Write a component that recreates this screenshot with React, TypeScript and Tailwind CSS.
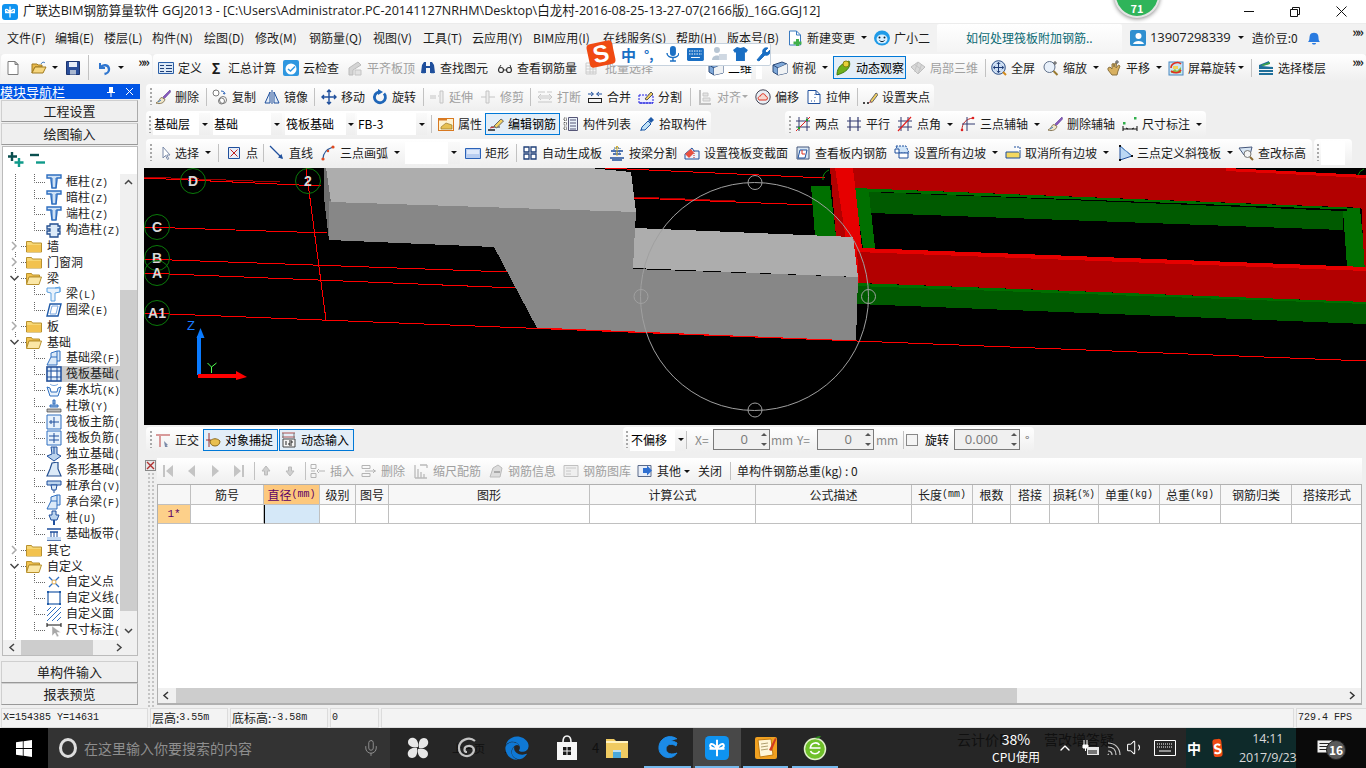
import type { ReactNode } from "react"
import { ChevronUp, Mic, Volume1 } from "lucide-react"
import { FaEdge } from "react-icons/fa"

const S = ({ children }: { children: ReactNode }) => (
  <svg width="16" height="16" viewBox="0 0 16 16" className="shrink-0 block">{children}</svg>
)

const blue = "#2a62b8"
const dk = "#1f4f9c"

const I = {
  newDoc: <S><path d="M3 1.500h7l3 3v10H3z" fill="#fff" stroke="#7c7c7c" /><path d="M10 1.500v3h3z" fill="#ddd" stroke="#7c7c7c" /></S>,
  open: <S><path d="M1 4h5l1 1h4v2H4l-3 6z" fill="#e8b84a" stroke="#a07a20" /><path d="M4 7h11l-3 6H1z" fill="#f6d67e" stroke="#a07a20" /><path d="M10 4c1-2 3-2.500 4-1" fill="none" stroke="#4a7fc0" /></S>,
  save: <S><path d="M1.500 1.500h13v13h-13z" fill="#2b4f9a" stroke="#1c3570" /><path d="M4 2h8v5H4z" fill="#e8eef8" /><path d="M5 10h6v4.500H5z" fill="#aab8d0" /></S>,
  undo: <S><path d="M4 3v5h5" fill="none" stroke="#2f76cf" strokeWidth="2" /><path d="M4.500 7.500C7 4 12.500 4.500 13 9c.3 2.500-2 4.500-4.500 5" fill="none" stroke="#2f76cf" strokeWidth="2.400" /></S>,
  define: <S><path d="M.5 2.500h15v11H.5z" fill="#dbe8f6" stroke="#2a5fa8" /><path d="M2 5h4v1H2zM2 8h4v1H2zM2 11h4v1H2zM8 5h6v1H8zM8 8h6v1H8zM8 11h6v1H8z" fill="#1f3f78" /></S>,
  cloud: <S><rect y="0" width="16" height="16" rx="2" fill="#2f97e0" /><circle cx="8" cy="9" r="5.500" fill="#fff" /><path d="M5 9l2.500 2L12 6.500" fill="none" stroke="#2f97e0" strokeWidth="1.500" /></S>,
  flush: <S><path d="M2 8l9-6 3 3-8 5v5H2z" fill="#d4d4d4" stroke="#bbb" /><path d="M8 10h6v5H8z" fill="#e2e2e2" stroke="#c4c4c4" /></S>,
  binoc: <S><path d="M2 5l2-3h2v4h4V2h2l2 3 1 8h-5V8H6v5H1z" fill={dk} /><path d="M2 13h3v1H2zM11 13h3v1h-3z" fill="#bcd" /></S>,
  glasses: <S><circle cx="4" cy="10" r="2.500" fill="none" stroke="#333" strokeWidth="1.200" /><circle cx="12" cy="10" r="2.500" fill="none" stroke="#333" strokeWidth="1.200" /><path d="M6.500 10h3M2 8l2-3M14 8l-1-3" stroke="#333" /></S>,
  batch: <S><path d="M1 3h10v11H1z" fill="none" stroke="#ccc" /><path d="M1 6h10M1 9h10M1 12h10M5 3v11M8 3v11" stroke="#ccc" /></S>,
  cube: <S><path d="M1 5l9-3 5 2v9l-9 2-5-3z" fill="#7fa8d8" stroke="#2c4a78" /><path d="M1 5l5 3v7M6 8l9-4" fill="none" stroke="#2c4a78" /><path d="M6 8l9-4v9l-9 2z" fill="#f0f2f4" /></S>,
  orbit: <S><path d="M1 15c0-5 2-9 6-11l6-3c1 2 1 4 0 6-2 4-6 6-12 8z" fill="#6fb01c" stroke="#3f7a10" /><circle cx="10" cy="4" r="3" fill="#e6d23a" stroke="#8a8010" /></S>,
  cubeGray: <S><path d="M1 7l7-5 7 5-7 7z" fill="#d8d8d8" stroke="#bdbdbd" /><path d="M4.500 4.500l7 5M8 2l-3.500 9.500M11.500 4.500L8 14" stroke="#c4c4c4" /></S>,
  full: <S><circle cx="7.500" cy="7.500" r="6.800" fill="#cfe0f4" stroke="#2c4f86" /><path d="M7.500 2.500v10M2.500 7.500h10M5.800 4l1.700-1.700L9.200 4M5.800 11l1.700 1.700 1.700-1.700M4 5.800L2.300 7.500 4 9.200M11 5.800l1.700 1.700L11 9.200" fill="none" stroke="#1d3a74" /><path d="M12 12l3 3" stroke="#d28a1a" strokeWidth="2" /></S>,
  zoomI: <S><circle cx="6.500" cy="7" r="5.500" fill="#e8f0fa" stroke="#60708a" /><path d="M10.500 11l4 4" stroke="#9a7a30" strokeWidth="2" /><path d="M12 1v4M10 3h4" stroke="#555" /></S>,
  hand: <S><path d="M2 8l2-1 2 2V4l1.500-.5L8 7l1-4 1.500.5L10 8l2.500-3 1.500 1-2 5-1 4H6L2 10z" fill="#d8b060" stroke="#8a7240" /><path d="M11 0v4M9 2h4" stroke="#555" /></S>,
  screenRot: <S><rect x="1" y="2" width="14" height="13" fill="#c8e4f4" stroke="#4a88c0" /><path d="M3 12l4-3 2 2 4-4v6H3z" fill="#8cc04a" /><path d="M3 8C3 3 10 1 13 4" fill="none" stroke="#e03020" strokeWidth="1.600" /><path d="M3 11c4 3 8 2 10-1" fill="none" stroke="#e03020" strokeWidth="1.600" /><path d="M5 6h5v3H5z" fill="#f2d45a" /></S>,
  floors: <S><path d="M1 5l10-4v3L4 6l11 1v2H1zM1 10h14v2H1zM1 13h14v2H1z" fill="#1f6f9a" /><path d="M3 5l9-3v2L5 6z" fill="#3aa04a" /></S>,
  brush: <S><path d="M15 1L8 8l1.500 1.500L15.500 3z" fill="#8a5ac0" stroke="#5a3a90" strokeWidth=".6" /><path d="M7 8.500C4 9 5 12 1 14c4 1.500 8 0 9-3.500z" fill="#efe6c8" stroke="#8a7a58" /><path d="M3 13l3-2" stroke="#3a7ac0" /></S>,
  copy: <S><circle cx="4" cy="4" r="3" fill="#fff" stroke="#7a7a7a" /><circle cx="11" cy="11" r="3.500" fill="#fff" stroke="#7a7a7a" /><circle cx="9.500" cy="12" r="3" fill="none" stroke="#7a7a7a" /><path d="M9 2c3 0 4 2 4 3M13 5l-2-.5" fill="none" stroke={blue} /></S>,
  mirror: <S><path d="M1 14L6 3v11zM10 3l5 11h-5z" fill="#e4eef8" stroke={dk} /><path d="M8 1v14" stroke={dk} /></S>,
  move: <S><path d="M8 1v14M1 8h14M6 3l2-2 2 2M6 13l2 2 2-2M3 6L1 8l2 2M13 6l2 2-2 2" fill="none" stroke={dk} strokeWidth="1.400" /></S>,
  rot: <S><path d="M12 4.500A5.500 5.500 0 1 1 7 2.800" fill="none" stroke="#1f66b8" strokeWidth="2.800" /><path d="M6 0l5 3-5 3z" fill="#1f66b8" /></S>,
  extend: <S><path d="M1 7h6M1 9h6M9 7h1" stroke="#c4c4c4" /><path d="M11 2h3v12h-3z" fill="#eee" stroke="#c4c4c4" /></S>,
  trim: <S><path d="M1 8h14" stroke="#c4c4c4" /><path d="M6 2h3v12H6z" fill="#eee" stroke="#c4c4c4" /></S>,
  cut: <S><path d="M1 3h7M10 3h5M1 13h14M2 7h12M2 9h12" stroke="#c8c8c8" /><path d="M4 5L1 8l3 3M12 5l3 3-3 3" fill="none" stroke="#c8c8c8" /></S>,
  merge: <S><path d="M1 5h5M10 5h5M4 3L6.500 5 4 7M12 3L9.500 5 12 7" fill="none" stroke={dk} /><path d="M1 9h14v1H1zM1 13h14v1H1zM1 9h1v5H1zM14 9h1v5h-1z" fill="#222" /></S>,
  split: <S><path d="M1 6h14v8H1z" fill="#eef" stroke="#2020e0" strokeDasharray="2 1" /><path d="M7 10l6-7 2 2-6 6z" fill="#f2d060" stroke="#555" /><path d="M1 14h14" stroke="#2020e0" /></S>,
  align: <S><path d="M3 1v14h11" fill="none" stroke="#c0c0c0" strokeWidth="2" /><path d="M6 4h5v3H6zM6 9h7v3H6z" fill="#e4e4e4" stroke="#c8c8c8" /></S>,
  offset: <S><circle cx="8" cy="8" r="7.200" fill="#e8eef4" stroke="#445" /><path d="M4 11c-2-2 0-4 1.500-4C6 4 10 4 10.500 7c2 0 2.500 3 1 4z" fill="#f6d8d0" stroke="#e03020" /></S>,
  stretch: <S><path d="M2 1.500h8l4 4v9H2z" fill="#fff" stroke={dk} /><path d="M10 1.500v4h4M5 12h1M8 12h1M9 8v1M9 5v1" fill="none" stroke={dk} /></S>,
  grip: <S><path d="M1 14h2M5 14h2" stroke="#111" strokeWidth="1.400" /><path d="M8 12l6-8 2 1.500-6 8z" fill="#f2d060" stroke="#666" /><path d="M8 12l-1 2 2-.500" fill="#c33" /></S>,
  attr: <S><rect x=".5" y="2.500" width="15" height="12" fill="#fdf2d0" stroke="#d87820" /><path d="M1 2.500h8v2H1z" fill="#d87820" /><path d="M3 11l5-4 6 2v4H3z" fill="#e6c050" stroke="#8a6a20" strokeWidth=".6" /></S>,
  editBar: <S><path d="M0 14h7" stroke="#111" strokeWidth="1.400" /><path d="M3 11h9" stroke="#333" /><path d="M6 10l7-7 2.500 2-7 7z" fill="#f2d060" stroke="#666" /><path d="M2 12l4-1" stroke="#c33" /></S>,
  list: <S><path d="M5.500 1.500h9v13h-9z" fill="#eaf2fa" stroke="#557" /><path d="M7 4h6M7 7h6M7 10h6M7 13h6" stroke="#557" /><path d="M1 2h2.500v2.500H1zM1 6.500h2.500V9H1zM1 11h2.500v2.500H1z" fill="#fff" stroke="#333" strokeDasharray="1 .6" strokeWidth=".8" /></S>,
  picker: <S><path d="M2 14l1-3 6-6 3 3-6 6z" fill="#bfe0f6" stroke="#1f5aa8" /><path d="M9 4l3-3 3 3-3 3z" fill="#1f5aa8" /><path d="M1.500 15l1.500-2" stroke="#1f5aa8" /></S>,
  twoPt: <S><path d="M4 1v14M12 1v14M1 5h14M1 11h14" stroke="#333a70" /><path d="M1 15L15 1" stroke="#e02020" /><circle cx="4" cy="12" r="1.200" fill="#20a020" /><circle cx="12" cy="4" r="1.200" fill="#20a020" /></S>,
  parallel: <S><path d="M4 1v14M12 1v14M1 5h14M1 11h14" stroke="#333a70" strokeWidth="1.200" /></S>,
  angle: <S><path d="M4 1v14M11 1v14M1 5h14M1 11h14" stroke="#333a70" /><path d="M1 15L14 1" stroke="#e02020" strokeWidth="1.200" /></S>,
  arc3: <S><path d="M2 14C2 7 6 3 13 2" fill="none" stroke="#c02020" /><path d="M7 1v14M2 8h13" stroke="#333a70" /><circle cx="2" cy="14" r="1.300" fill="#e02020" /><circle cx="13" cy="2" r="1.300" fill="#e02020" /></S>,
  dim: <S><path d="M1 10v5M15 10v5M1 13h14M6 13l-2-1M10 13l2-1" fill="none" stroke="#111" /><rect x="1" y="6" width="2.500" height="2.500" fill="#2fb04a" /><rect x="12" y="1" width="2.500" height="2.500" fill="#2fb04a" /></S>,
  arrow: <S><path d="M8 2v11l2.500-2.500 2 4 1.300-.7-2-3.800h3.200z" fill="#fff" stroke="#7a8aa8" /></S>,
  point: <S><path d="M2.500 2.500h11v11h-11z" fill="#e8eef8" stroke={dk} /><path d="M4.500 4.500l7 7M11.500 4.500l-7 7" stroke="#c02020" /></S>,
  line: <S><path d="M1 1l12 12" stroke={dk} strokeWidth="1.300" /><path d="M14 14l-5-1.500 3.500-3.500z" fill={dk} /></S>,
  arc: <S><path d="M3 14C3 8 7 4 13 2" fill="none" stroke="#2a5a9a" strokeWidth="1.200" /><circle cx="3" cy="14" r="1.600" fill="#e04a20" /><circle cx="8" cy="6" r="1.200" fill="#e04a20" /><circle cx="13" cy="2" r="1.600" fill="#e04a20" /></S>,
  rect: <S><path d="M.5 3.500h15v10H.5z" fill="#b8cdf0" stroke={blue} /><path d="M2 5h12v4H2z" fill="#dfe9fa" /></S>,
  auto: <S><path d="M2 2h5v5H2zM9 2h5v5H9zM2 9h5v5H2zM9 9h5v5H9z" fill="#fff" stroke="#1f3f78" strokeWidth="1.300" /></S>,
  beam: <S><path d="M2 6h12M4 9h8M1 13h14M3 15h10" stroke={dk} strokeWidth="1.500" /><path d="M8 1v10M6 4l2-3 2 3" fill="none" stroke="#d8b020" /><rect x="5" y="3" width="6" height="4" fill="none" stroke={blue} strokeDasharray="1 1" /></S>,
  sect: <S><path d="M1 9l7-6 2 3H15v8H1z" fill="#eef3fa" stroke={dk} /><path d="M1 9l6-5 3 4-5 5z" fill="#e85040" /><path d="M10 6v8" stroke="#c02020" strokeDasharray="1 1" /></S>,
  view: <S><path d="M2 2h12v12H2z" fill="#d8e6f4" stroke="#44567a" /><path d="M5 5h7l-2 8H3z" fill="#fff" stroke={dk} /><path d="M7 5v4h3" fill="none" stroke="#e03020" /></S>,
  slope: <S><path d="M2 1h10l3 7H5z" fill="#cfe4f8" stroke={dk} strokeDasharray="2 1" /><path d="M1 4h4v4H1zM5 8h9v5H5z" fill="#fff" stroke={dk} /></S>,
  unslope: <S><path d="M1 7h14v6H1z" fill="#f4d860" stroke={dk} /><path d="M9 2h6v6" fill="#fff" stroke={dk} strokeDasharray="2 1" /></S>,
  tri: <S><path d="M3 1v14l12-4z" fill="#bcd8f4" stroke={dk} /><path d="M3 1l12 10" stroke="#6a9ad0" /><rect x="2" y="0" width="2" height="2" fill="#111" /><rect x="2" y="14" width="2" height="2" fill="#111" /><rect x="14" y="10" width="2" height="2" fill="#111" /></S>,
  elev: <S><path d="M1 3l13-1-2 8H6z" fill="#d8e6f4" stroke="#44567a" /><circle cx="9.500" cy="9" r="3.500" fill="#f4f4f4" stroke="#777" /><path d="M12 12l3 3" stroke="#8a6a30" strokeWidth="2" /></S>,
  ortho: <S><path d="M1 2h14v2H1zM4 2h2v13H4z" fill="#d89a9a" /><path d="M9 9l4 4-1.500.5L13 15l-3 0z" fill="#7a8aa8" /></S>,
  snap: <S><path d="M4 1v14M1 8h5" stroke="#a03030" /><path d="M5 9c3-3 7-3 10 0 0 3-2 5-5 5-3 0-5-2-5-5z" fill="#e8c050" stroke="#8a6a20" /></S>,
  dyn: <S><path d="M1 1h13M1 5h13" stroke="#b05050" /><path d="M2 1v5M13 1v5" stroke="#777" /><path d="M2 7h12v8H2z" fill="#f4f4f4" stroke="#444" /><path d="M5 9v4M8 9h3v2H8v2h3" fill="none" stroke="#222" /></S>,
  first: <S><path d="M3 2h2v12H3zM13 2v12L6 8z" fill="#c4c4c4" /></S>,
  prev: <S><path d="M11 2v12L4 8z" fill="#c4c4c4" /></S>,
  next: <S><path d="M5 2v12l7-6z" fill="#c4c4c4" /></S>,
  last: <S><path d="M11 2h2v12h-2zM3 2v12l7-6z" fill="#c4c4c4" /></S>,
  up: <S><path d="M8 3l4 5H9.500v4h-3V8H4z" fill="#d0d0d0" stroke="#bbb" /></S>,
  down: <S><path d="M8 13l4-5H9.500V4h-3v4H4z" fill="#d0d0d0" stroke="#bbb" /></S>,
  ins: <S><path d="M1 1.500h5v4H1zM1 10.500h5v4H1z" fill="none" stroke="#b4b4b4" /><path d="M9 8h6M9 6l-2 2 2 2" fill="none" stroke="#b4b4b4" /><path d="M1 8h4" stroke="#b4b4b4" /></S>,
  del: <S><path d="M1 2.500h8v3H1zM1 10.500h8v3H1zM4 8h11M12 6l2 2-2 2" fill="none" stroke="#b4b4b4" /></S>,
  scale: <S><path d="M2 2v13M5 6v9M8 9v6M11 11v4M14 2v3M7 2h7M2 15h12" stroke="#bbb" strokeWidth="1.300" /></S>,
  info: <S><path d="M2 14l3-9 5-3 4 3-2 9z" fill="#ddd" stroke="#bbb" /><path d="M6 9h6" stroke="#aaa" strokeWidth="2" /></S>,
  lib: <S><path d="M1 2.500h14v11H1z" fill="#efefef" stroke="#c0c0c0" /><path d="M3 5h10M3 8h5M3 11h5" stroke="#c8c8c8" /></S>,
  other: <S><path d="M1 2.500h13v11H1z" fill="#e8eef8" stroke="#5a6a8a" /><path d="M6 5h4V2.500l5 5-5 5V10H6z" fill="#2f6fd0" /></S>,
}

const Caret = ({ off, className = "ml-[6px]" }: { off?: boolean; className?: string }) => (
  <span className={`${className} inline-block shrink-0 w-0 h-0 border-x-[3px] border-x-transparent border-t-[3px] ${off ? "border-t-[#aaa]" : "border-t-[#111]"}`} />
)

const Sep = ({ w }: { w: string }) => (
  <div className={`${w} shrink-0 h-full flex items-center`}>
    <span className="w-px h-[18px] bg-[#c2c2c2]" />
  </div>
)

const Handle = ({ w = "w-[9px]" }: { w?: string }) => (
  <div className={`${w} shrink-0 flex items-center justify-center`}>
    <span className="block w-[2px] h-[17px] bg-[repeating-linear-gradient(to_bottom,#a8a8a8_0_2px,transparent_2px_4px)]" />
  </div>
)

type ToolProps = { w: string; icon?: ReactNode; label?: string; caret?: boolean; off?: boolean; caretClass?: string }

const T = ({ w, icon, label, caret, off, caretClass }: ToolProps) => (
  <div className={`${w} shrink-0 h-full flex items-center whitespace-nowrap ${off ? "text-[#a0a0a0]" : "text-[#1c1c1c]"}`}>
    {icon}
    {label && <span className={icon ? "ml-1" : ""}>{label}</span>}
    {caret && <Caret off={off} className={caretClass} />}
  </div>
)

const Drop = ({ w, caretW, label }: { w: string; caretW: string; label?: string }) => (
  <div className="flex shrink-0 h-[22px]">
    <div className={`${w} bg-white pl-[1px] flex items-center whitespace-nowrap`}>{label}</div>
    <div className={`${caretW} bg-linear-to-b from-[#fafafa] to-[#eeeeee] flex items-center justify-center`}><Caret className="" /></div>
  </div>
)

const barBg = "bg-linear-to-b from-white to-[#efefef]"

const More = () => <span className="ml-auto mr-[4px] self-start mt-[1px] text-[13px] leading-[13px] font-bold tracking-[-2px] text-[#222]">»»</span>

const LogoTile = ({ size = 16 }: { size?: number }) => (
  <svg width={size} height={size} viewBox="0 0 16 16" className="shrink-0 block">
    <rect width="16" height="16" rx="3" fill="#0f93f0" />
    <path d="M8 2.500v11M3 8.500h10M8 8.500C5 8.500 3 7.500 3.500 6s3-.5 4.500 2.500c1.500-3 4-4 4.500-2.500s-1.500 2.500-4.500 2.500z" fill="none" stroke="#fff" strokeWidth="1.300" />
  </svg>
)

function TitleBar() {
  return (
    <div className="h-[23px] shrink-0 bg-white flex items-center pl-[2px] pr-[2px]">
      <LogoTile />
      <span className="ml-[5px] text-[12.55px] text-[#1a1a1a] whitespace-nowrap font-['Open_Sans','Noto_Sans_CJK_SC',sans-serif]">
        广联达BIM钢筋算量软件 GGJ2013 - [C:\Users\Administrator.PC-20141127NRHM\Desktop\白龙村-2016-08-25-13-27-07(2166版)_16G.GGJ12]
      </span>
      <div className="ml-auto flex items-center">
        <div className="w-[46px] flex justify-center"><span className="w-[10px] h-px bg-[#111]" /></div>
        <div className="w-[46px] flex justify-center">
          <svg width="10" height="10" viewBox="0 0 10 10"><path d="M.5 2.500h7v7h-7zM2.500 2.500v-2h7v7h-2" fill="none" stroke="#111" /></svg>
        </div>
        <div className="w-[46px] flex justify-center">
          <svg width="11" height="11" viewBox="0 0 11 11"><path d="M.5.5l10 10M10.500.5l-10 10" stroke="#111" /></svg>
        </div>
      </div>
    </div>
  )
}

function MenuBar() {
  const items = [
    ["文件(F)", "w-[48px]"], ["编辑(E)", "w-[49px]"], ["楼层(L)", "w-[48px]"], ["构件(N)", "w-[52px]"], ["绘图(D)", "w-[51px]"],
    ["修改(M)", "w-[54px]"], ["钢筋量(Q)", "w-[64px]"], ["视图(V)", "w-[50px]"], ["工具(T)", "w-[49px]"], ["云应用(Y)", "w-[61px]"],
    ["BIM应用(I)", "w-[70px]"], ["在线服务(S)", "w-[73px]"], ["帮助(H)", "w-[51px]"], ["版本号(B)", "w-[60px]"],
  ]
  return (
    <div className="h-[31px] shrink-0 bg-[#f2f2f2] border-t border-[#ececec] flex items-center pl-[7px] pb-[3px] text-xs text-[#1c1c1c]">
      {items.map(([label, w]) => (
        <div key={label} className={`${w} shrink-0 whitespace-nowrap`}>{label}</div>
      ))}
      <T w="w-[87px]" label="新建变更" caret icon={<S><path d="M2.500 1h7l4 4v10h-11z" fill="#fff" stroke="#3a7ac0" /><path d="M9.500 1v4h4" fill="none" stroke="#3a7ac0" /><path d="M9 9h3v2.500h2.500v3H12V16H9v-1.500H6.500v-3H9z" fill="#42b04a" /></S>} />
      <T w="w-[63px]" label="广小二" icon={<S><ellipse cx="8" cy="8" rx="8" ry="7.500" fill="#1f9be8" /><ellipse cx="8" cy="9" rx="5.500" ry="4.500" fill="#d8f0ff" /><circle cx="5.500" cy="7.500" r="1" fill="#123" /><circle cx="10.500" cy="7.500" r="1" fill="#123" /><path d="M5.500 10.500c1.500 1.500 3.500 1.500 5 0" fill="none" stroke="#123" /></S>} />
      <div className="w-[185px] shrink-0 h-[28px] bg-linear-to-b from-white to-[#f4f4f4] rounded-t-[2px] pl-[29px] flex items-center text-[#0b6a74] whitespace-nowrap">如何处理筏板附加钢筋..</div>
      <div className="ml-[8px] flex items-center h-full">
        <S><rect width="16" height="16" rx="2" fill="#2f8fd0" /><circle cx="8.500" cy="6" r="3" fill="#fff" /><path d="M3 14c1-4 10-4 11 0z" fill="#fff" /></S>
      </div>
      <span className="ml-1 text-[13px] tracking-[-.1px] font-['Open_Sans',sans-serif]">13907298339</span>
      <Caret className="ml-[7px]" />
      <span className="ml-[8px] whitespace-nowrap">造价豆:0</span>
      <svg width="14" height="16" viewBox="0 0 14 16" className="ml-[9px]"><path d="M1 12c2-2 1-4 2-7 1-3 7-3 8 0 1 3 0 5 2 7z" fill="#2a7be0" /><path d="M5 13h4c0 2-4 2-4 0z" fill="#2a7be0" /></svg>
      <More />
    </div>
  )
}

function Toolbar1() {
  return (
    <div className="h-[29px] shrink-0 flex text-xs bg-[#efefef] pb-[2px]">
      <div className={`w-[151px] ml-px shrink-0 ${barBg} rounded-sm flex items-center pl-[4px]`}>
        {I.newDoc}
        <div className="ml-[10px]">{I.open}</div>
        <Caret className="ml-[5px]" />
        <div className="ml-[7px]">{I.save}</div>
        <span className="ml-[7px] w-px h-[25px] bg-[#c2c2c2]" />
        <div className="ml-[7px]">{I.undo}</div>
        <Caret className="ml-[6px]" />
        <More />
      </div>
      <div className={`ml-[1px] flex-1 ${barBg} rounded-sm flex items-center pl-[5px]`}>
        <T w="w-[50px]" icon={I.define} label="定义" />
        <T w="w-[75px]" icon={<span className="w-4 text-center text-[14px] font-bold leading-none">Σ</span>} label="汇总计算" />
        <T w="w-[64px]" icon={I.cloud} label="云检查" />
        <T w="w-[73px]" icon={I.flush} label="平齐板顶" off />
        <T w="w-[77px]" icon={I.binoc} label="查找图元" />
        <T w="w-[88px]" icon={I.glasses} label="查看钢筋量" />
        <T w="w-[121px]" icon={I.batch} label="批量选择" off />
        <div className="w-[66px] shrink-0 flex h-[23px]">
          <div className="w-[45px] bg-white flex items-center pl-[2px] whitespace-nowrap">{I.cube}<span className="ml-1">二维</span></div>
          <div className="ml-[5px] w-[6px] bg-white" />
        </div>
        <T w="w-[61px]" icon={I.cube} label="俯视" caret />
        <div className="w-[73px] h-[23px] shrink-0 border border-[#0078d7] bg-[#e3eef8] flex items-center pl-[2px]">
          {I.orbit}<span className="ml-1 whitespace-nowrap">动态观察</span>
        </div>
        <div className="w-[4px] shrink-0" />
        <T w="w-[75px]" icon={I.cubeGray} label="局部三维" off />
        <Sep w="w-[6px]" />
        <T w="w-[52px]" icon={I.full} label="全屏" />
        <T w="w-[63px]" icon={I.zoomI} label="缩放" caret />
        <T w="w-[62px]" icon={I.hand} label="平移" caret />
        <T w="w-[83px]" icon={I.screenRot} label="屏幕旋转" caret caretClass="ml-[2px]" />
        <Sep w="w-[7px]" />
        <T w="w-[80px]" icon={I.floors} label="选择楼层" />
        <More />
      </div>
    </div>
  )
}

function Row2() {
  return (
    <div className={`h-[26px] pb-px ml-[2px] w-[788px] flex items-center text-xs ${barBg} rounded-sm`}>
      <Handle />
      <T w="w-[51px]" icon={I.brush} label="删除" />
      <Sep w="w-[6px]" />
      <T w="w-[52px]" icon={I.copy} label="复制" />
      <T w="w-[50px]" icon={I.mirror} label="镜像" />
      <Sep w="w-[7px]" />
      <T w="w-[51px]" icon={I.move} label="移动" />
      <T w="w-[51px]" icon={I.rot} label="旋转" />
      <Sep w="w-[6px]" />
      <T w="w-[51px]" icon={I.extend} label="延伸" off />
      <T w="w-[50px]" icon={I.trim} label="修剪" off />
      <Sep w="w-[7px]" />
      <T w="w-[50px]" icon={I.cut} label="打断" off />
      <T w="w-[51px]" icon={I.merge} label="合并" />
      <T w="w-[52px]" icon={I.split} label="分割" />
      <Sep w="w-[7px]" />
      <T w="w-[58px]" icon={I.align} label="对齐" off caret caretClass="ml-[1px]" />
      <T w="w-[51px]" icon={I.offset} label="偏移" />
      <T w="w-[51px]" icon={I.stretch} label="拉伸" />
      <Sep w="w-[5px]" />
      <T w="w-[72px]" icon={I.grip} label="设置夹点" />
    </div>
  )
}

function Row3() {
  return (
    <div className="h-[26px] mt-px flex items-center text-xs">
      <div className={`ml-[2px] w-[565px] h-full flex items-center ${barBg} rounded-sm`}>
        <Handle w="w-[7px]" />
        <Drop w="w-[46px]" caretW="w-[11px]" label="基础层" />
        <div className="w-[3px] shrink-0" />
        <Drop w="w-[58px]" caretW="w-[11px]" label="基础" />
        <div className="w-[3px] shrink-0" />
        <Drop w="w-[61px]" caretW="w-[9px]" label="筏板基础" />
        <div className="w-[2px] shrink-0" />
        <Drop w="w-[59px]" caretW="w-[11px]" label="FB-3" />
        <div className="w-[4px] shrink-0" />
        <Sep w="w-[7px]" />
        <T w="w-[47px]" icon={I.attr} label="属性" />
        <div className="w-[75px] h-[22px] shrink-0 border border-[#0078d7] bg-[#e3eef8] flex items-center pl-[2px]">
          {I.editBar}<span className="ml-[4px] whitespace-nowrap">编辑钢筋</span>
        </div>
        <div className="w-[3px] shrink-0" />
        <T w="w-[76px]" icon={I.list} label="构件列表" />
        <T w="w-[71px]" icon={I.picker} label="拾取构件" />
      </div>
      <div className={`ml-[74px] w-[421px] h-full flex items-center ${barBg} rounded-sm`}>
        <Handle w="w-[10px]" />
        <T w="w-[51px]" icon={I.twoPt} label="两点" />
        <T w="w-[51px]" icon={I.parallel} label="平行" />
        <T w="w-[63px]" icon={I.angle} label="点角" caret />
        <T w="w-[87px]" icon={I.arc3} label="三点辅轴" caret />
        <T w="w-[75px]" icon={I.brush} label="删除辅轴" />
        <T w="w-[84px]" icon={I.dim} label="尺寸标注" caret />
      </div>
    </div>
  )
}

function Row4() {
  return (
    <div className="h-[27px] mt-[2px] flex items-center text-xs">
      <div className={`ml-[2px] w-[1166px] h-full flex items-center ${barBg} rounded-sm`}>
        <Handle />
        <T w="w-[63px]" icon={I.arrow} label="选择" caret />
        <Sep w="w-[8px]" />
        <T w="w-[37px]" icon={I.point} label="点" />
        <Sep w="w-[6px]" />
        <T w="w-[51px]" icon={I.line} label="直线" />
        <T w="w-[85px]" icon={I.arc} label="三点画弧" caret />
        <Drop w="w-[43px]" caretW="w-[12px]" />
        <div className="w-[5px] shrink-0" />
        <T w="w-[51px]" icon={I.rect} label="矩形" />
        <Sep w="w-[6px]" />
        <T w="w-[87px]" icon={I.auto} label="自动生成板" />
        <T w="w-[75px]" icon={I.beam} label="按梁分割" />
        <T w="w-[111px]" icon={I.sect} label="设置筏板变截面" />
        <T w="w-[99px]" icon={I.view} label="查看板内钢筋" />
        <T w="w-[111px]" icon={I.slope} label="设置所有边坡" caret />
        <T w="w-[112px]" icon={I.unslope} label="取消所有边坡" caret />
        <T w="w-[121px]" icon={I.tri} label="三点定义斜筏板" caret />
        <T w="w-[72px]" icon={I.elev} label="查改标高" />
      </div>
      <div className={`ml-[2px] w-[38px] h-full flex items-center ${barBg} rounded-sm`}>
        <Handle w="w-[7px]" />
        <div className="w-[24px] h-[24px] bg-white" />
      </div>
    </div>
  )
}

const Bubble = ({ x, y, t }: { x: number; y: number; t: string }) => (
  <g>
    <circle cx={x} cy={y} r="12.500" fill="none" stroke="#0a7a0a" />
    <text x={x} y={y + 5} textAnchor="middle" fill="#d8d8d8" fontSize="14" fontWeight="700" fontFamily="Liberation Sans, sans-serif">{t}</text>
  </g>
)

function Scene() {
  const red = "#ff0000"
  return (
    <svg viewBox="144 168 1222 257" className="block w-full h-[257px] bg-black shrink-0">
      <g shapeRendering="crispEdges">
        {/* right frame */}
        <polygon points="811,186 830,186 836,236 815,236" fill="#007000" />
        <polygon points="853,168 1226,168 1366,175 1366,208 854,188" fill="#b20000" />
        <polygon points="1226,168 1366,175 1366,178 1226,171" fill="#e60000" />
        <polygon points="854,188 869,192 875,248 863,248" fill="#007000" />
        <polygon points="869,192 1343,211 1343,230 871,213" fill="#005a00" />
        <polygon points="854,188 1360,208 1360,210 854,191" fill="#007000" />
        <polygon points="1343,211 1360,209 1366,267 1347,267" fill="#007000" />
        <polygon points="1360,178 1366,178 1366,290 1363,240" fill="#b20000" />
        <polygon points="830,168 837,168 846,237 836,237" fill="#b20000" />
        <polygon points="835,168 853,168 862,248 859,285 846,240" fill="#e60000" />
        <polygon points="857,251 1366,270 1366,302 859,283" fill="#b20000" />
        <polygon points="862,248 1366,267 1366,271 857,252" fill="#e60000" />
        <polygon points="857,283 1366,302 1366,324 857,304" fill="#005a00" />
        <polygon points="857,283 1366,302 1366,304 857,286" fill="#007000" />
        {/* axis lines behind blocks */}
        <path d="M144 227L327 233M144 259L509 272M144 273L517 288M144 313L1366 361M144 178L321 186M605 168L825 178M634 198L812 205" stroke={red} fill="none" />
        <path d="M144 177L280 182M634 197L735 201" stroke="#a00000" fill="none" />
        <path d="M306 168L326 320" stroke={red} />
        {/* grey blocks */}
        <polygon points="324,168 326,168 331,202 329,240 324,198" fill="#6f6f6f" />
        <polygon points="329,201 636,212 633,269 858,277 856,341 537,328 494,247 329,240" fill="#878787" />
        <polygon points="326,168 590,168 631,172 636,212 331,202" fill="#adadad" />
        <polygon points="635,228 853,237 858,277 633,268" fill="#adadad" />
        <path d="M537 328L856 341" stroke={red} />
      </g>
      <Bubble x={193} y={181} t="D" />
      <Bubble x={308} y={181} t="2" />
      <Bubble x={157} y={227} t="C" />
      <Bubble x={157} y={258} t="B" />
      <Bubble x={157} y={273} t="A" />
      <Bubble x={157} y={313} t="A1" />
      <path d="M823 180a9 9 0 0 1 6-10M1358 175a10 10 0 0 1 6-6" fill="none" stroke="#0a8a0a" />
      <g fill="none" stroke="#a0a0a0">
        <circle cx="754.500" cy="296.500" r="114" />
        <circle cx="755" cy="182.500" r="7" />
        <circle cx="641" cy="296.500" r="7" />
        <circle cx="868.500" cy="296.500" r="7" />
        <circle cx="755" cy="410" r="7" />
      </g>
      <path d="M199 375V336" stroke="#0a7bff" strokeWidth="4" />
      <path d="M200.500 328l4 10h-8z" fill="#0a7bff" />
      <path d="M198 376H236" stroke="#ff0000" strokeWidth="4" />
      <path d="M236 371l11 6-11 3z" fill="#ff0000" />
      <path d="M211.500 373v-6l-4-4M211.500 367l5-4" stroke="#50ff50" fill="none" />
      <text x="187" y="330" fill="#1a7bff" fontSize="13" fontFamily="Liberation Sans, sans-serif">Z</text>
    </svg>
  )
}

const Spin = ({ w, v }: { w: string; v: string }) => (
  <div className={`${w} h-[21px] shrink-0 border border-[#7a7a7a] bg-[#f0f0f0] flex items-center justify-end text-[#777] text-[13px]`}>
    <span className="font-['Open_Sans',sans-serif]">{v}</span>
    <div className="ml-[11px] mr-[1px] w-[9px] flex flex-col items-center gap-[7px]">
      <span className="w-0 h-0 border-x-[3px] border-x-transparent border-b-[3px] border-b-[#555]" />
      <span className="w-0 h-0 border-x-[3px] border-x-transparent border-t-[3px] border-t-[#555]" />
    </div>
  </div>
)

function SnapBar() {
  return (
    <div className="h-[25px] mt-[2px] shrink-0 flex items-center text-xs">
      <div className={`ml-[2px] w-[208px] h-full flex items-center ${barBg} rounded-sm`}>
        <Handle />
        <T w="w-[48px]" icon={I.ortho} label="正交" />
        <div className="w-[75px] h-[22px] shrink-0 border border-[#0078d7] bg-[#e3eef8] flex items-center pl-[1px]">{I.snap}<span className="ml-1 whitespace-nowrap">对象捕捉</span></div>
        <div className="w-[75px] h-[22px] shrink-0 ml-px border border-[#0078d7] bg-[#e3eef8] flex items-center pl-[1px]">{I.dyn}<span className="ml-1 whitespace-nowrap">动态输入</span></div>
      </div>
      <div className={`ml-[269px] w-[411px] h-full flex items-center ${barBg} rounded-sm`}>
        <Handle w="w-[7px]" />
        <Drop w="w-[45px]" caretW="w-[11px]" label="不偏移" />
        <Sep w="w-[6px]" />
        <div className="w-[21px] shrink-0 pl-[3px] text-[#888]">X=</div>
        <Spin w="w-[57px]" v="0" />
        <div className="w-[27px] shrink-0 pl-px text-[#888]">mm</div>
        <div className="w-[20px] shrink-0 text-[#888]">Y=</div>
        <Spin w="w-[57px]" v="0" />
        <div className="w-[29px] shrink-0 pl-[2px] text-[#888]">mm</div>
        <Sep w="w-[3px]" />
        <span className="w-[12px] h-[12px] shrink-0 border border-[#888] bg-[#f4f4f4]" />
        <span className="ml-[7px] w-[29px] shrink-0 whitespace-nowrap">旋转</span>
        <Spin w="w-[66px]" v="0.000" />
        <span className="ml-[5px] text-[#666]">°</span>
      </div>
    </div>
  )
}

const Cols = "grid grid-cols-[33px_73px_56px_36px_33px_201px_166px_156px_61px_38px_39px_49px_61px_61px_71px_71px]"

const Head = ({ a, b, cur }: { a: string; b?: string; cur?: boolean }) => (
  <div className={`h-[20px] flex items-center justify-center border-r border-b border-[#c0c0c0] whitespace-nowrap ${cur ? "bg-[#fdc87d] text-[#5b0066]" : "bg-[#f7f7f7] text-[#222]"}`}>
    {a}{b && <span className="font-['Liberation_Mono',monospace] text-[10px]">{b}</span>}
  </div>
)

function RebarPanel() {
  const heads: [string, string?][] = [
    ["筋号"], ["直径", "(mm)"], ["级别"], ["图号"], ["图形"], ["计算公式"], ["公式描述"], ["长度", "(mm)"], ["根数"], ["搭接"],
    ["损耗", "(%)"], ["单重", "(kg)"], ["总重", "(kg)"], ["钢筋归类"], ["搭接形式"],
  ]
  return (
    <div className="mt-[6px] flex flex-1 min-h-0 text-xs">
      <div className="w-[13px] shrink-0 flex flex-col items-center pt-[2px]">
        <svg width="11" height="11" viewBox="0 0 11 11" className="shrink-0"><rect x=".5" y=".5" width="10" height="10" fill="#e8e8e8" stroke="#888" /><path d="M2 2l7 7M9 2L2 9" stroke="#b03030" strokeWidth="1.400" /></svg>
        <div className="mt-px w-[8px] flex-1 bg-[radial-gradient(#c4c4c4_1px,transparent_1px)] bg-size-[4px_4px]" />
      </div>
      <div className="flex-1 min-w-0 flex flex-col pr-[4px] pb-[3px]">
        <div className={`h-[26px] shrink-0 flex items-center pl-[3px] ${barBg}`}>
          <T w="w-[24px]" icon={I.first} />
          <T w="w-[23px]" icon={I.prev} />
          <T w="w-[24px]" icon={I.next} />
          <T w="w-[23px]" icon={I.last} />
          <Sep w="w-[4px]" />
          <T w="w-[24px]" icon={I.up} />
          <T w="w-[23px]" icon={I.down} />
          <Sep w="w-[5px]" />
          <T w="w-[51px]" icon={I.ins} label="插入" off />
          <T w="w-[52px]" icon={I.del} label="删除" off />
          <T w="w-[75px]" icon={I.scale} label="缩尺配筋" off />
          <T w="w-[75px]" icon={I.info} label="钢筋信息" off />
          <T w="w-[74px]" icon={I.lib} label="钢筋图库" off />
          <T w="w-[61px]" icon={I.other} label="其他" caret caretClass="ml-[3px]" />
          <T w="w-[32px]" label="关闭" />
          <Sep w="w-[7px]" />
          <span className="whitespace-nowrap text-[#1c1c1c]">单构件钢筋总重(kg) : 0</span>
        </div>
        <div className="flex-1 min-h-0 flex flex-col bg-white border border-[#b0b0b0] border-b-2 overflow-hidden">
          <div className={Cols}>
            <Head a="" />
            {heads.map(([a, b]) => <Head key={a} a={a} b={b} cur={a === "直径"} />)}
          </div>
          <div className={Cols}>
            <div className="h-[19px] flex items-center justify-center bg-[#fdd08a] text-[#5b0066] border-r border-b border-[#c0c0c0] font-['Liberation_Mono',monospace] text-[11px]">1*</div>
            <div className="border-r border-b border-[#c0c0c0]" />
            <div className="border-l border-l-black border-r border-b border-[#c0c0c0] bg-[#d5e8f8]" />
            {["c3", "c4", "c5", "c6", "c7", "c8", "c9", "c10", "c11", "c12", "c13", "c14", "c15"].map((k) => (
              <div key={k} className="border-r border-b border-[#c0c0c0]" />
            ))}
          </div>
          <div className="flex-1" />
          <div className="h-[15px] shrink-0 flex items-center bg-[#f0f0f0]">
            <svg width="18" height="15" viewBox="0 0 18 15" className="shrink-0"><path d="M10 4L6 7.500l4 3.500" fill="none" stroke="#333" strokeWidth="1.500" /></svg>
            <div className="w-[841px] h-full bg-[#cdcdcd]" />
            <svg width="18" height="15" viewBox="0 0 18 15" className="shrink-0 ml-auto"><path d="M7 4l4 3.500L7 11" fill="none" stroke="#333" strokeWidth="1.500" /></svg>
          </div>
        </div>
      </div>
    </div>
  )
}

type Leaf = { t: string; m?: string; i?: ReactNode; lv: 1 | 2; open?: boolean; sel?: boolean }

const colI = (c: string) => <S><path d="M1 1h14v3h-4v2l-1 8H6L5 6V4H1z" fill="#cfe2f6" stroke={c} strokeWidth="1.400" /><path d="M6 4v10M10 4v10" stroke={c} /></S>
const folderClosed = <S><path d="M0.500 3.500h5l1 1.500h9v9h-15z" fill="#f7d774" stroke="#b8912e" /><path d="M1 7h14v7H1z" fill="#f2c24e" /></S>
const folderOpen = <S><path d="M.5 3.500h5l1 1.500h7v2H3l-2.500 7z" fill="#f2c24e" stroke="#b8912e" /><path d="M3 7h12.500l-2.500 7.500H.5z" fill="#fbe7a6" stroke="#b8912e" /></S>

const tree: Leaf[] = [
  { t: "框柱", m: "(Z)", lv: 2, i: colI("#2f6fc0") },
  { t: "暗柱", m: "(Z)", lv: 2, i: colI("#2f6fc0") },
  { t: "端柱", m: "(Z)", lv: 2, i: colI("#2f6fc0") },
  { t: "构造柱", m: "(Z)", lv: 2, i: <S><path d="M4 2h8v2h2v3h-2v2h2v3h-2v3H4v-3H1V9h3V7H1V4h3z" fill="#dceaf8" stroke="#244f90" strokeWidth="1.300" /></S> },
  { t: "墙", lv: 1 },
  { t: "门窗洞", lv: 1 },
  { t: "梁", lv: 1, open: true },
  { t: "梁", m: "(L)", lv: 2, i: <S><path d="M1 2h13v4l-5 1v8H5V7L1 6z" fill="#e8f2fc" stroke="#5aa0e0" /><path d="M9 2l5-1v5" fill="none" stroke="#5aa0e0" /></S> },
  { t: "圈梁", m: "(E)", lv: 2, i: <S><path d="M4 2h11l-3 12H1z" fill="#fff" stroke="#1f5aa8" strokeWidth="1.400" /><path d="M6 4h6l-2 8H4z" fill="#fff" stroke="#7aa8e0" /></S> },
  { t: "板", lv: 1 },
  { t: "基础", lv: 1, open: true },
  { t: "基础梁", m: "(F)", lv: 2, i: <S><path d="M1 15l4-8V3l6-2h3v10h-3v4z" fill="#dceaf8" stroke="#2f6fc0" /><path d="M11 1v10M5 7h6" stroke="#2f6fc0" /></S> },
  { t: "筏板基础", m: "(", lv: 2, sel: true, i: <S><path d="M1 1h14v14H1z" fill="#dceaf8" stroke="#1f4f9c" strokeWidth="1.500" /><path d="M1 5h14M1 11h14M5 1v14M11 1v14" stroke="#1f4f9c" /><path d="M6 6h4v4H6z" fill="#fff" /></S> },
  { t: "集水坑", m: "(K)", lv: 2, i: <S><path d="M1 5l3 1 1 4h6l1-4 3-1-3 9H4z" fill="#e8f2fc" stroke="#2f6fc0" /><path d="M4 2c2 2 6 2 8 0" fill="none" stroke="#7aa8e0" /></S> },
  { t: "柱墩", m: "(Y)", lv: 2, i: <S><path d="M7 2h2v4H7zM4 7h8v2H4z" fill="#9ab8dc" stroke="#2f6fc0" /><path d="M1 11h14v3H1z" fill="#bbb" stroke="#444" strokeWidth=".7" /></S> },
  { t: "筏板主筋", m: "(", lv: 2, i: <S><path d="M1 1h14v14H1z" fill="#e8f2fc" stroke="#2f6fc0" /><path d="M3 8h10M8 3v10M5 6v4" stroke="#1f4f9c" /></S> },
  { t: "筏板负筋", m: "(", lv: 2, i: <S><path d="M1 1h14v14H1z" fill="#e8f2fc" stroke="#2f6fc0" /><path d="M3 6h10M3 10h10M8 3v10" stroke="#1f4f9c" /></S> },
  { t: "独立基础", m: "(", lv: 2, i: <S><path d="M5 1h6v7l4 2-7 5-7-5 5-2z" fill="#bcd4ee" stroke="#1f4f9c" /><path d="M8 1v7" stroke="#1f4f9c" /></S> },
  { t: "条形基础", m: "(", lv: 2, i: <S><path d="M6 1l6-1v7l3 7H1l3-7z" fill="#dceaf8" stroke="#244f90" strokeWidth="1.200" /></S> },
  { t: "桩承台", m: "(V)", lv: 2, i: <S><path d="M1 3h14v4H1z" fill="#bcd4ee" stroke="#1f4f9c" /><path d="M5 7h6l-1 5H6zM8 12v3" fill="#dceaf8" stroke="#1f4f9c" /></S> },
  { t: "承台梁", m: "(F)", lv: 2, i: <S><path d="M1 15l4-8V3l6-2h3v10h-3v4z" fill="#dceaf8" stroke="#2f6fc0" /><path d="M11 1v10M5 7h6" stroke="#2f6fc0" /></S> },
  { t: "桩", m: "(U)", lv: 2, i: <S><path d="M6 1h4v4h3l-2 5H5L3 5h3z" fill="#bcd4ee" stroke="#1f4f9c" /><path d="M8 10v5" stroke="#1f4f9c" strokeWidth="2" /></S> },
  { t: "基础板带", m: "(", lv: 2, i: <S><path d="M1 3h14M4 6h8M1 14h14" stroke="#1f4f9c" strokeWidth="1.400" /><path d="M5 6v8M11 6v8M8 6v8" stroke="#1f4f9c" /><path d="M1 11h14v3H1z" fill="#c8dcf4" /></S> },
  { t: "其它", lv: 1 },
  { t: "自定义", lv: 1, open: true },
  { t: "自定义点", lv: 2, i: <S><path d="M3 3l10 10M13 3L3 13" stroke="#2f6fc0" strokeWidth="1.300" /><circle cx="8" cy="8" r="2" fill="#fff" stroke="#e8b050" /></S> },
  { t: "自定义线", m: "(", lv: 2, i: <S><rect x="2" y="2" width="12" height="12" fill="none" stroke="#1f5aa8" strokeWidth="1.200" /><path d="M1 1h2v2H1zM13 1h2v2h-2zM1 13h2v2H1zM13 13h2v2h-2z" fill="#1f5aa8" /></S> },
  { t: "自定义面", lv: 2, i: <S><path d="M1 5L5 1M1 10L10 1M1 15L15 1M6 15L15 6M11 15l4-4" stroke="#2f6fc0" /></S> },
  { t: "尺寸标注", m: "(", lv: 2, i: <S><path d="M1 1v4M15 1v4M1 3h14" stroke="#111" /><path d="M6 4v10l3-3 2 4 2-1-2-3.500h4z" fill="#a8a8a8" stroke="#fff" strokeWidth=".5" /></S> },
  { t: "", lv: 1 },
]

const TreeRow = ({ n }: { n: Leaf }) => (
  <div className="flex h-4 shrink-0 items-center">
    <svg width={n.lv === 2 ? 43 : 23} height="16" viewBox={n.lv === 2 ? "0 0 43 16" : "0 0 23 16"} className="shrink-0 block">
      <path d="M12.500 0v16" stroke="#666" strokeDasharray="1 1" />
      {n.lv === 2 && <path d="M31.500 0v8.500H42" fill="none" stroke="#666" strokeDasharray="1 1" />}
      {n.lv === 1 && <path d="M18 8.500h5" stroke="#666" strokeDasharray="1 1" />}
      {n.lv === 1 && (
        <>
          <rect x="7" y="3" width="10" height="10" fill="#fff" />
          {n.open
            ? <path d="M7.500 6l4 4 4-4" fill="none" stroke="#444" strokeWidth="1.500" />
            : <path d="M9 4l4 4-4 4" fill="none" stroke="#aaa" strokeWidth="1.500" />}
        </>
      )}
    </svg>
    {n.lv === 1
      ? <div className="flex items-center">{n.open ? folderOpen : folderClosed}<span className="ml-[5px]">{n.t}</span></div>
      : (
        <div className={`flex items-center h-full flex-1 pr-px whitespace-nowrap ${n.sel ? "bg-[#cccccc]" : ""}`}>
          {n.i}
          <span className="ml-[4px]">{n.t}<span className="font-['Liberation_Mono',monospace] text-[10px]">{n.m}</span></span>
        </div>
      )}
  </div>
)

function NavPanel() {
  const btn = "h-[22px] shrink-0 mx-px w-[137px] border border-[#cfcfcf] border-b-[#999] border-r-[#aaa] bg-[#efefef] flex items-center justify-center text-[13px] text-[#222]"
  return (
    <aside className="w-[144px] shrink-0 flex flex-col pt-px">
      <div className="h-[15px] w-[140px] shrink-0 bg-[#0055e5] flex items-center text-white text-[13px] whitespace-nowrap">
        <span>模块导航栏</span>
        <svg width="10" height="11" viewBox="0 0 10 11" className="ml-[41px]"><path d="M3 1h4v5h2v1H1V6h2zM4.500 7h1v4h-1z" fill="#fff" /></svg>
        <svg width="9" height="9" viewBox="0 0 9 9" className="ml-[9px]"><path d="M1 1l7 7M8 1L1 8" stroke="#fff" /></svg>
      </div>
      <div className={`${btn} mt-px`}>工程设置</div>
      <div className={`${btn} mt-px`}>绘图输入</div>
      <div className="mt-px ml-[2px] w-[136px] h-[510px] shrink-0 border border-[#bbb] bg-white flex flex-col text-xs text-[#222]">
        <div className="h-[27px] shrink-0 flex items-start pt-[5px] pl-[4px] gap-[5px]">
          <svg width="17" height="15" viewBox="0 0 17 15"><path d="M5 0v9M1 4.500h9" stroke="#0a4f4f" strokeWidth="2.400" /><path d="M12 6v9M7.500 10.500h9" stroke="#0f9a8a" strokeWidth="2.400" /></svg>
          <svg width="17" height="15" viewBox="0 0 17 15"><path d="M1 3h9" stroke="#0a4f4f" strokeWidth="2.400" /><path d="M7 10.500h9" stroke="#0f9a8a" strokeWidth="2.400" /></svg>
        </div>
        <div className="flex-1 min-h-0 flex">
          <div className="w-[117px] overflow-hidden flex flex-col">
            {tree.map((n, i) => <TreeRow key={i} n={n} />)}
          </div>
          <div className="w-[17px] shrink-0 bg-[#f0f0f0] flex flex-col">
            <svg width="17" height="17" viewBox="0 0 17 17" className="shrink-0"><path d="M5 10l3.500-3.500L12 10" fill="none" stroke="#444" strokeWidth="1.500" /></svg>
            <div className="mt-[99px] h-[321px] bg-[#cdcdcd]" />
            <svg width="17" height="17" viewBox="0 0 17 17" className="shrink-0 mt-[11px]"><path d="M5 7l3.500 3.500L12 7" fill="none" stroke="#444" strokeWidth="1.500" /></svg>
          </div>
        </div>
        <div className="h-[15px] shrink-0 bg-[#f0f0f0] flex items-center">
          <svg width="18" height="15" viewBox="0 0 18 15" className="shrink-0"><path d="M11 4L7 7.500l4 3.500" fill="none" stroke="#444" strokeWidth="1.500" /></svg>
          <div className="w-[72px] h-full bg-[#cdcdcd]" />
          <svg width="18" height="15" viewBox="0 0 18 15" className="shrink-0 ml-auto mr-[9px]"><path d="M7 4l4 3.500L7 11" fill="none" stroke="#444" strokeWidth="1.500" /></svg>
        </div>
      </div>
      <div className={`${btn} mt-[5px]`}>单构件输入</div>
      <div className={btn}>报表预览</div>
    </aside>
  )
}

function StatusBar() {
  const c = "h-full shrink-0 border border-[#dcdcdc] bg-[#f3f3f3] flex items-center pl-px whitespace-nowrap"
  const mono = "font-['Liberation_Mono',monospace] text-[10px]"
  return (
    <div className="h-[20px] shrink-0 flex text-xs text-[#222] bg-[#f0f0f0]">
      <div className={`${c} ${mono} w-[147px] ml-px`}>X=154385 Y=14631</div>
      <div className={`${c} w-[78px] ml-[2px]`}>层高:<span className={mono}>3.55m</span></div>
      <div className={`${c} w-[98px] ml-[2px]`}>底标高:<span className={mono}>-3.58m</span></div>
      <div className={`${c} ${mono} w-[49px] ml-[2px]`}>0</div>
      <div className={`${c} w-[913px] ml-[2px]`} />
      <div className={`${c} ${mono} w-[71px] ml-[2px]`}>729.4 FPS</div>
    </div>
  )
}

const TB = ({ w, children, on, bar }: { w: string; children?: ReactNode; on?: boolean; bar?: boolean }) => (
  <div className={`${w} shrink-0 h-full flex items-center justify-center relative ${on ? "bg-[#484848]" : ""}`}>
    {children}
    {bar && <span className="absolute bottom-0 inset-x-[2px] h-[2px] bg-[#76b9ed]" />}
  </div>
)

function Taskbar() {
  return (
    <div className="h-[40px] shrink-0 flex bg-[#262626] text-white font-['Noto_Sans_CJK_SC',sans-serif]">
      <div className="w-[48px] shrink-0 bg-black flex items-center justify-center">
        <svg width="16" height="17" viewBox="0 0 16 17"><path d="M0 2.300L6.800 1.300V8H0zM7.600 1.200L16 0v8H7.600zM0 9h6.800v6.700L0 14.700zM7.600 9H16v8l-8.400-1.200z" fill="#fff" /></svg>
      </div>
      <div className="w-[342px] shrink-0 bg-[#333333] flex items-center pl-[11px]">
        <span className="w-[18px] h-[20px] rounded-[50%] border-[3px] border-[#dddddd]" />
        <span className="ml-[7px] text-[14px] text-[#8e8e8e] whitespace-nowrap">在这里输入你要搜索的内容</span>
        <Mic size={18} strokeWidth={1.300} className="ml-[110px] text-[#8e8e8e]" />
      </div>
      <div className="w-[3px] shrink-0" />
      <TB w="w-[50px]">
        <svg width="24" height="24" viewBox="0 0 24 24"><path d="M12 11C6 12 2 10 2 6c0-3 3-5 6-4 3 1 5 5 4 9zM12 13c6-1 10 1 10 5 0 3-3 5-6 4-3-1-5-5-4-9zM13 12c-1-6 1-10 5-10 3 0 5 3 4 6-1 3-5 5-9 4zM11 12c1 6-1 10-5 10-3 0-5-3-4-6 1-3 5-5 9-4z" fill="#e8e8e8" /></svg>
      </TB>
      <TB w="w-[49px]">
        <span className="absolute left-[9px] text-[11px] text-[#101010] whitespace-nowrap">上一页</span>
        <svg width="26" height="26" viewBox="0 0 26 26" className="relative"><path d="M20 6C14 1 4 5 4 13s9 10 13 6 1-9-4-8-4 6-1 6" fill="none" stroke="#c4c4c4" strokeWidth="2.200" /></svg>
      </TB>
      <TB w="w-[49px]">
        <span className="absolute left-[12px] text-[13px] text-[#101010]">1</span>
        <FaEdge size={24} className="relative text-[#0f78d4]" />
      </TB>
      <TB w="w-[51px]">
        <svg width="22" height="26" viewBox="0 0 22 26"><path d="M1 7h20v18H1z" fill="#f6f6f6" /><path d="M7 7c0-8 8-8 8 0" fill="none" stroke="#f6f6f6" strokeWidth="1.600" /><path d="M7 12h3.500v3.500H7zM11.500 12H15v3.500h-3.500zM7 16.500h3.500V20H7zM11.500 16.500H15V20h-3.500z" fill="#1a1a1a" /></svg>
      </TB>
      <TB w="w-[50px]">
        <span className="absolute left-0 text-[13px] text-[#101010]">4</span>
        <svg width="24" height="24" viewBox="0 0 24 24" className="relative"><path d="M1 3h8l2 2h12v17H1z" fill="#f0cb62" /><path d="M1 5h22v2H1z" fill="#fff2c0" /><path d="M8 14h8v8H8z" fill="#4aa8dc" /><path d="M8 14h8v2H8z" fill="#bde0f4" /></svg>
      </TB>
      <TB w="w-[51px]" bar>
        <svg width="26" height="28" viewBox="0 0 26 28"><path d="M22 5C14-1 3 5 4 15c1 9 13 12 18 4-5 2-11 1-11-4s6-6 10-3l1-3c-5-3-10-3-12 0" fill="#1b8be8" stroke="#1b8be8" /></svg>
      </TB>
      <TB w="w-[48px]" on bar>
        <LogoTile size={24} />
      </TB>
      <TB w="w-[49px]" bar>
        <svg width="24" height="24" viewBox="0 0 24 24"><rect x="1" y="1" width="22" height="22" rx="2" fill="#f0a020" /><path d="M4 4l13-1 2 16-13 2z" fill="#fff6d8" stroke="#c07a10" /><path d="M7 8l7-1M7 11l7-1M7 14l7-1" stroke="#b0a070" /><path d="M15 14L21 2l1.500 1-5 12z" fill="#d03a20" /></svg>
      </TB>
      <TB w="w-[50px]" bar>
        <svg width="24" height="26" viewBox="0 0 24 26"><circle cx="12" cy="14" r="10.500" fill="#6fc02a" stroke="#dff0c8" strokeWidth="1.500" /><path d="M6.500 13h11M7.500 13a5 5 0 0 1 9-3M16.500 16a5 5 0 0 1-9 0" fill="none" stroke="#fff" strokeWidth="1.600" /><path d="M12 3c2-2 5-2 6-2-1 2-3 3-6 2z" fill="#2a8a1a" /></svg>
      </TB>
      <div className="flex-1 relative">
        <span className="absolute left-[117px] top-[1px] text-[14px] text-[#101010] whitespace-nowrap">云计价P5.0</span>
        <span className="absolute left-[204px] top-[1px] text-[14px] text-[#101010] whitespace-nowrap">营改增答疑</span>
        <span className="absolute left-[157px] top-[1px] w-[38px] text-center text-[14px] whitespace-nowrap">38%</span>
        <span className="absolute left-[152px] top-[20px] text-[12px] whitespace-nowrap">CPU使用</span>
        <ChevronUp size={16} className="absolute left-[217px] top-[12px] text-white" />
        <svg width="18" height="18" viewBox="0 0 18 18" className="absolute left-[241px] top-[11px]"><path d="M3 1v5M6 1v5M2 6h5v3H2zM4.500 9v3" stroke="#fff" fill="#fff" /><path d="M6 8h12v8H6z" fill="#e8e8e8" /><path d="M7 11h9v4H7z" fill="#777" /></svg>
        <svg width="16" height="16" viewBox="0 0 16 16" className="absolute left-[267px] top-[12px]"><path d="M1 15a1 1 0 0 1 1-1M1 11c3 0 4 2 4 4M1 7c5 0 8 3 8 8M1 3c7 0 12 5 12 12" fill="none" stroke="#c8c8c8" strokeWidth="1.200" /></svg>
        <Volume1 size={19} strokeWidth={1.300} className="absolute left-[286px] top-[10px] text-white" />
        <svg width="22" height="16" viewBox="0 0 22 16" className="absolute left-[314px] top-[12px]"><path d="M.5.5h21v15H.5z" fill="none" stroke="#fff" /><path d="M3 4h16M3 7h16" stroke="#fff" strokeDasharray="1 1" /><path d="M5 11h12" stroke="#fff" /></svg>
        <div className="absolute right-0 top-0 w-[70px] h-full bg-[#0a0a0a]">
          <svg width="16" height="16" viewBox="0 0 16 16" className="absolute left-[21px] top-[12px]"><path d="M.5.5h15v12H.5z" fill="#f0f0f0" /><path d="M2.500 3.500h11M2.500 6.500h11M2.500 9.500h8" stroke="#222" /></svg>
          <span className="absolute left-[30px] top-[12px] w-[20px] h-[20px] rounded-full bg-[#5a5a5a] border border-[#222] flex items-center justify-center text-[12px] font-bold text-white leading-none">16</span>
        </div>
        <div className="absolute left-[346px] top-0 w-[110px] h-full bg-[#0e2a2a] flex items-center">
          <span className="ml-[1px] w-[12px] text-[14px] font-bold whitespace-nowrap">中</span>
          <span className="ml-[14px] w-[14px] h-[18px] rounded-[3px] bg-[#f04a12] -rotate-6 flex items-center justify-center text-[14px] font-bold leading-none">S</span>
          <span className="ml-[16px] w-[60px] shrink-0 flex flex-col items-center text-[#d8d8d8] text-[12.5px] leading-[19px] tracking-[-.2px] font-['Open_Sans',sans-serif] whitespace-nowrap">
            <span>14:11</span>
            <span>2017/9/23</span>
          </span>
        </div>
      </div>
    </div>
  )
}

export default function App() {
  return (
    <div className="relative w-[1366px] h-[768px] overflow-hidden flex flex-col bg-[#efefef] font-['Noto_Sans_CJK_SC',sans-serif]">
      <TitleBar />
      <MenuBar />
      <Toolbar1 />
      <div className="flex h-[625px] shrink-0">
        <NavPanel />
        <main className="flex-1 min-w-0 flex flex-col pt-px">
          <Row2 />
          <Row3 />
          <Row4 />
          <div className="h-[2px] shrink-0" />
          <Scene />
          <SnapBar />
          <RebarPanel />
        </main>
      </div>
      <StatusBar />
      <Taskbar />

      {/* green score badge hanging off the top edge */}
      <div className="absolute left-[1114px] top-[-28px] w-[46px] h-[46px] rounded-full bg-[#2fb45a] border-2 border-[#e4e4e4] shadow-[0_1px_4px_#888] flex items-end justify-center text-[11px] font-bold text-white leading-[15px]">71</div>

      {/* sogou input method bar floating over the toolbar */}
      <div className="absolute left-[588px] top-[42px] flex items-center">
        <span className="z-10 w-[26px] h-[24px] rounded-[4px] bg-[#f04a12] -rotate-12 flex items-center justify-center text-white text-[24px] font-bold leading-none font-['Liberation_Sans',sans-serif]">S</span>
        <div className="-ml-[2px] w-[159px] h-[23px] bg-white border border-[#c6d2de] rounded-r-[2px] flex items-center pl-[8px]">
          <span className="text-[#1a6fc4] text-[15px] font-bold leading-none">中</span>
          <span className="ml-[8px] text-[#1a6fc4] text-[13px] font-bold leading-none">°,</span>
          <svg width="14" height="16" viewBox="0 0 14 16" className="ml-[12px]"><rect x="4" y="0" width="6" height="10" rx="3" fill="#1a6fc4" /><path d="M1 7c0 6 12 6 12 0M7 12v3M4 15h6" fill="none" stroke="#1a6fc4" strokeWidth="1.400" /></svg>
          <svg width="17" height="13" viewBox="0 0 17 13" className="ml-[8px]"><rect width="17" height="13" rx="1.500" fill="#1a6fc4" /><path d="M2 3h13M2 6h13" stroke="#fff" strokeDasharray="1.500 1" /><path d="M4 9.500h9" stroke="#fff" /></svg>
          <svg width="16" height="14" viewBox="0 0 16 14" className="ml-[7px]"><circle cx="6" cy="3" r="3" fill="#b8c6d4" /><path d="M1 13c0-6 10-6 10 0z" fill="#b8c6d4" /><rect x="8" y="7" width="8" height="6" fill="#cfd8e2" /></svg>
          <svg width="15" height="14" viewBox="0 0 15 14" className="ml-[6px]"><path d="M4 0l3.500 1L11 0l4 3-2 3-1-1v9H3V5L2 6 0 3z" fill="#1a6fc4" /></svg>
          <svg width="15" height="15" viewBox="0 0 15 15" className="ml-[7px]"><path d="M2 13L8 6c-1-3 1-6 5-5l-3 3 2 2 3-3c1 4-2 6-5 5l-6 6z" fill="#1a6fc4" stroke="#1a6fc4" /></svg>
        </div>
      </div>
    </div>
  )
}
